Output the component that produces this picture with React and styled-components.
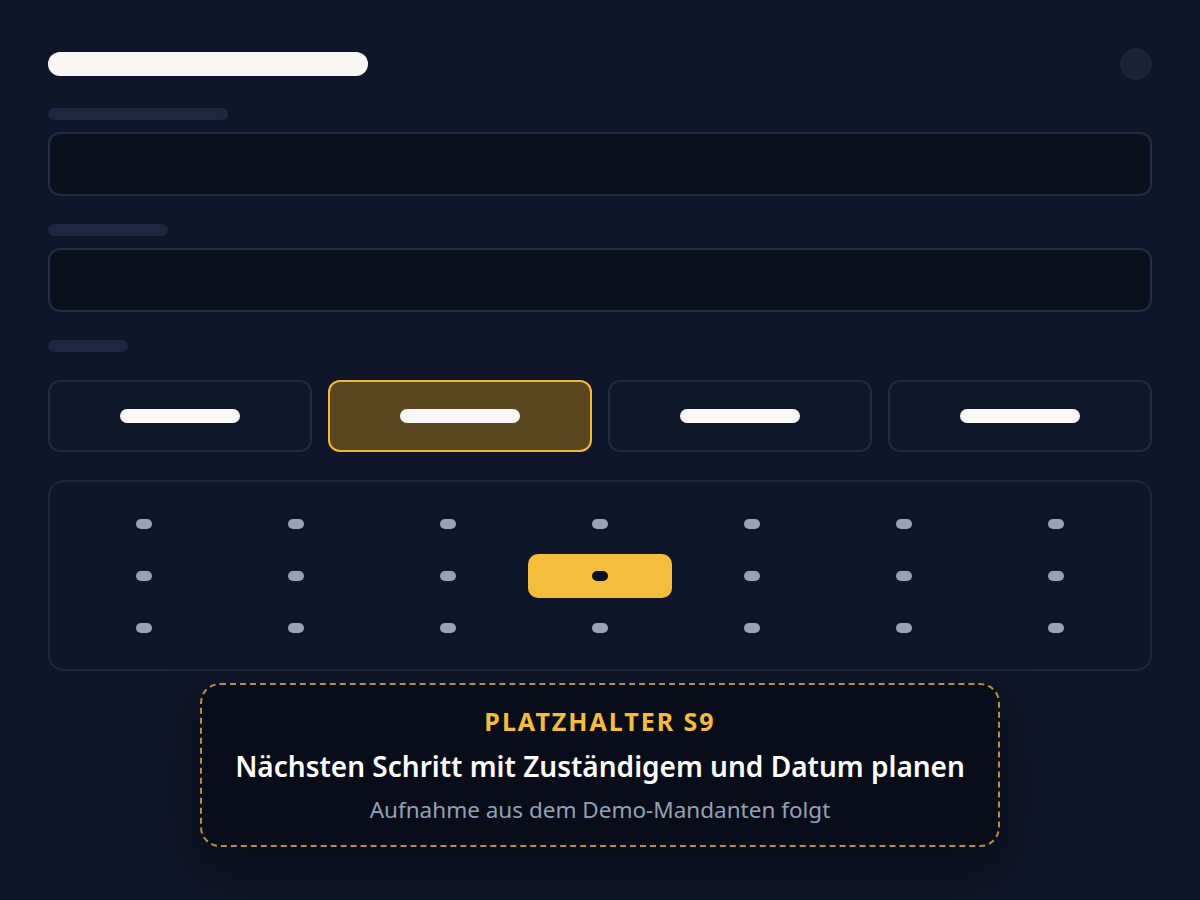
import React from "react";
import styled, { createGlobalStyle } from "styled-components";

const Global = createGlobalStyle`
  html, body {
    margin: 0;
    background: #0f1629;
    font-family: "Noto Sans", "Open Sans", sans-serif;
  }
`;

const options = [0, 1, 2, 3];
const rows = [0, 1, 2];
const cols = [0, 1, 2, 3, 4, 5, 6];

const App = () => {
  return (
    <>
      <Global />
      <S.Page>
        <S.Header>
          <S.TitleBar />
          <S.Avatar />
        </S.Header>

        <S.Field>
          <S.Label $w={180} />
          <S.Input />
        </S.Field>

        <S.Field>
          <S.Label $w={120} />
          <S.Input />
        </S.Field>

        <S.Field>
          <S.Label $w={80} />
        </S.Field>

        <S.Options>
          {options.map((o) => (
            <S.Option key={o} $active={o === 1}>
              <S.OptionBar />
            </S.Option>
          ))}
        </S.Options>

        <S.Grid>
          {rows.map((r) =>
            cols.map((c) => {
              const active = r === 1 && c === 3;
              return (
                <S.Cell key={`${r}-${c}`} $active={active}>
                  <S.Dot $active={active} />
                </S.Cell>
              );
            })
          )}
        </S.Grid>

        {/* platzhalter liegt über dem raster */}
        <S.Callout>
          <S.Kicker>PLATZHALTER S9</S.Kicker>
          <S.Heading>Nächsten Schritt mit Zuständigem und Datum planen</S.Heading>
          <S.Sub>Aufnahme aus dem Demo-Mandanten folgt</S.Sub>
        </S.Callout>
      </S.Page>
    </>
  );
};

export default App;

const S = {
  Page: styled.div`
    position: relative;
    box-sizing: border-box;
    width: 1200px;
    height: 900px;
    padding: 48px;
    display: flex;
    flex-direction: column;
    gap: 28px;
    background: #0f1629;
  `,
  Header: styled.div`
    display: flex;
    align-items: center;
    justify-content: space-between;
    height: 32px;
  `,
  TitleBar: styled.div`
    width: 320px;
    height: 24px;
    border-radius: 12px;
    background: #f8f7f3;
  `,
  Avatar: styled.div`
    width: 32px;
    height: 32px;
    border-radius: 50%;
    background: #1d2336;
  `,
  Field: styled.div`
    display: flex;
    flex-direction: column;
    gap: 12px;
  `,
  Label: styled.div`
    width: ${(p) => p.$w}px;
    height: 12px;
    border-radius: 6px;
    background: #1e2640;
  `,
  Input: styled.div`
    box-sizing: border-box;
    height: 64px;
    border-radius: 12px;
    border: 2px solid #232c40;
    background: #0a0f1b;
  `,
  Options: styled.div`
    display: grid;
    grid-template-columns: repeat(4, 1fr);
    gap: 16px;
  `,
  Option: styled.div`
    box-sizing: border-box;
    height: 72px;
    border-radius: 12px;
    border: 2px solid ${(p) => (p.$active ? "#f1b93c" : "#222b3f")};
    background: ${(p) => (p.$active ? "#5a4720" : "#0f182b")};
    display: flex;
    align-items: center;
    justify-content: center;
  `,
  OptionBar: styled.div`
    width: 120px;
    height: 14px;
    border-radius: 7px;
    background: #f8f7f3;
  `,
  Grid: styled.div`
    box-sizing: border-box;
    height: 191px;
    border-radius: 16px;
    border: 2px solid #1f283b;
    padding: 20px 22px;
    display: grid;
    grid-template-columns: repeat(7, 144px);
    grid-template-rows: repeat(3, 44px);
    gap: 8px;
  `,
  Cell: styled.div`
    border-radius: 10px;
    background: ${(p) => (p.$active ? "#f4bd3d" : "transparent")};
    display: flex;
    align-items: center;
    justify-content: center;
  `,
  Dot: styled.div`
    width: 16px;
    height: 10px;
    border-radius: 5px;
    background: ${(p) => (p.$active ? "#0b1020" : "#98a2b6")};
  `,
  Callout: styled.div`
    position: absolute;
    left: 200px;
    top: 683px;
    box-sizing: border-box;
    width: 800px;
    height: 164px;
    border-radius: 20px;
    border: 2px dashed #b88f3c;
    background: #090d19;
    box-shadow: 0 20px 50px rgba(0, 0, 0, 0.45);
    display: flex;
    flex-direction: column;
    align-items: center;
    justify-content: center;
    gap: 10px;
    text-align: center;
  `,
  Kicker: styled.div`
    font-size: 25px;
    font-weight: 700;
    letter-spacing: 2px;
    color: #f4bd3d;
    line-height: 32px;
  `,
  Heading: styled.div`
    font-size: 28px;
    font-weight: 600;
    color: #ffffff;
    line-height: 38px;
  `,
  Sub: styled.div`
    font-size: 22.5px;
    color: #94a0b5;
    line-height: 30px;
  `,
};
